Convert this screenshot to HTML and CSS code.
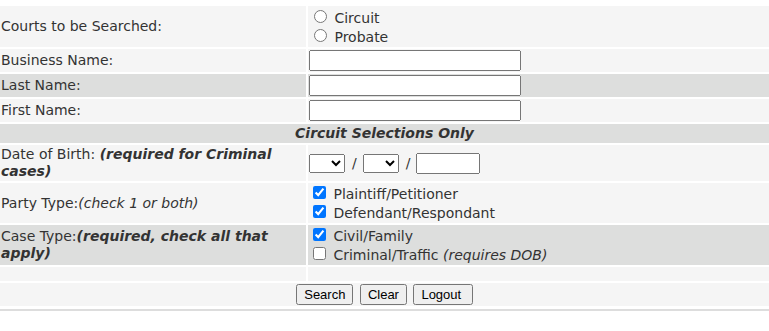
FILE: index.html
```html
<!DOCTYPE html>
<html lang="en">
<head>
  <meta charset="UTF-8" />
  <title>Case Search</title>
  <link rel="stylesheet" href="styles.css">
</head>
<body>
  <form class="search-form" onsubmit="return false;">
    <table class="search-table">
      <tr class="row-light">
        <td class="label">Courts to be Searched:</td>
        <td class="field radio-cell">
          <label><input type="radio" name="court" value="C"> Circuit</label><br>
          <label><input type="radio" name="court" value="P"> Probate</label>
        </td>
      </tr>
      <tr class="row-light">
        <td class="label">Business Name:</td>
        <td class="field"><input type="text" class="name-input" name="business"></td>
      </tr>
      <tr class="row-dark">
        <td class="label">Last Name:</td>
        <td class="field"><input type="text" class="name-input" name="last"></td>
      </tr>
      <tr class="row-light">
        <td class="label">First Name:</td>
        <td class="field"><input type="text" class="name-input" name="first"></td>
      </tr>
      <tr class="row-dark">
        <th colspan="2" class="section-head">Circuit Selections Only</th>
      </tr>
      <tr class="row-light">
        <td class="label">Date of Birth: <b><i>(required for Criminal cases)</i></b></td>
        <td class="field">
          <select class="dob-select" name="month"><option></option></select><span class="sep">/</span><select class="dob-select" name="day"><option></option></select><span class="sep">/</span><input type="text" class="year-input" name="year">
        </td>
      </tr>
      <tr class="row-light">
        <td class="label">Party Type:<i>(check 1 or both)</i></td>
        <td class="field">
          <label><input type="checkbox" name="plaintiff" checked> Plaintiff/Petitioner</label><br>
          <label><input type="checkbox" name="defendant" checked> Defendant/Respondant</label>
        </td>
      </tr>
      <tr class="row-dark">
        <td class="label">Case Type:<b><i>(required, check all that apply)</i></b></td>
        <td class="field">
          <label><input type="checkbox" name="civil" checked> Civil/Family</label><br>
          <label><input type="checkbox" name="criminal"> Criminal/Traffic <i>(requires DOB)</i></label>
        </td>
      </tr>
      <tr class="row-light spacer">
        <td></td>
        <td></td>
      </tr>
      <tr class="row-light">
        <td colspan="2" class="actions">
          <input type="submit" value="Search"> <input type="reset" value="Clear"> <input type="button" value="Logout ">
        </td>
      </tr>
    </table>
  </form>
  <div class="bottom-rule"></div>
</body>
</html>
```

FILE: styles.css
```css
body {
  margin: 0;
  padding: 0;
  background-color: #fff;
  font-family: "DejaVu Sans", Verdana, sans-serif;
  font-size: 14px;
  line-height: 17px;
  color: #333;
}

.search-form {
  margin: 0;
}

.search-table {
  width: calc(100% + 4px);
  margin: 4px 0 0 -2px;
  border-collapse: separate;
  border-spacing: 2px;
}

.search-table td,
.search-table th {
  padding: 1px;
  vertical-align: middle;
}

.row-light {
  background-color: #f5f5f5;
}

.row-dark {
  background-color: #dddedd;
}

.label {
  width: 304px;
  text-align: left;
}

.search-table .radio-cell {
  padding: 2px 1px 1px;
}

.field input[type="radio"] {
  margin: 2px 3px 0 5px;
}

.field input[type="checkbox"] {
  margin: 2px 3px 2px 4px;
}

.section-head {
  font-weight: bold;
  font-style: italic;
  text-align: center;
  height: 17px;
}

.name-input {
  box-sizing: border-box;
  width: 212px;
  margin: 0;
}

.dob-select {
  box-sizing: border-box;
  width: 36px;
  margin: 0;
}

.year-input {
  box-sizing: border-box;
  width: 64px;
  margin: 0;
}

.sep {
  margin: 0 6px 0 7px;
}

.spacer td {
  height: 12px;
}

.actions {
  text-align: center;
}

.actions input {
  font: 13px "Liberation Sans", Arial, sans-serif;
  margin: 0 1px;
}

.bottom-rule {
  height: 2px;
  margin-top: 1px;
  background-color: #dddddd;
}
```
